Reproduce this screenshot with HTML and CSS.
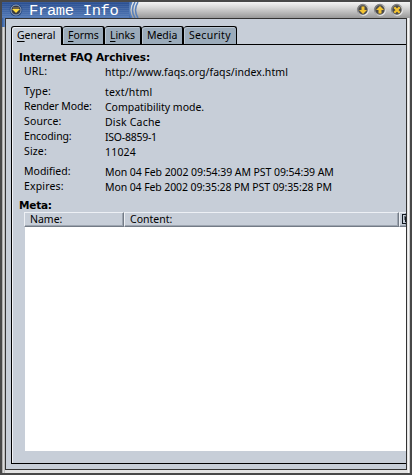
FILE: index.html
```html
<!DOCTYPE html>
<html lang="en"><head><meta charset="utf-8"><title>Frame Info</title><link rel="stylesheet" href="styles.css"></head>
<body>
<div class="window">
<header class="titlebar">
 <div class="caption">
  <svg class="orb" viewBox="0 0 14 14"><defs><linearGradient id="metal" x2="1" y2="1"><stop stop-color="#626262"/><stop offset="1" stop-color="#fff"/></linearGradient></defs><circle cx="7" cy="7" r="6.3" fill="#27487e"/><circle cx="7" cy="7" r="5" fill="#353a43" stroke="#91a5c5"/><path d="M3 6h8L7 10z" fill="#ffdc42"/><path d="M4 5h6" stroke="#a88c50"/></svg>
  <span class="title">Frame Info</span>
 </div>
 <svg class="curves" viewBox="0 0 12 16"><path d="M0 0H3Q-1 8 3 16H0z" fill="#4770b2"/><path d="M3 0Q-2 8 3 16M6 0Q1 8 6 16M9 0Q4 8 9 16" fill="none" stroke="#577fba" stroke-width="1.5"/></svg>
 <div class="buttons">
  <svg viewBox="0 0 14 14"><circle cx="7" cy="7" r="5.4" fill="#4b4b4b" stroke="url(#metal)" stroke-width="1.5"/><path d="M5.5 3.5h3V7H11L7 11 3 7h2.5z" fill="#f4c431"/></svg>
  <svg viewBox="0 0 14 14"><circle cx="7" cy="7" r="5.4" fill="#4b4b4b" stroke="url(#metal)" stroke-width="1.5"/><path d="M5.5 10.5h3V7H11L7 3 3 7h2.5z" fill="#f4c431"/></svg>
  <svg viewBox="0 0 14 14"><circle cx="7" cy="7" r="5.4" fill="#4b4b4b" stroke="url(#metal)" stroke-width="1.5"/><path d="M4.3 4.3 9.7 9.7M9.7 4.3 4.3 9.7" stroke="#f4c431" stroke-width="2.3"/></svg>
 </div>
</header>
<main class="content">
 <nav class="tabs">
  <div class="tab active t1"><span><u>G</u>eneral</span></div><div class="tab t2"><span><u>F</u>orms</span></div><div class="tab t3"><span><u>L</u>inks</span></div><div class="tab t4"><span>Med<u>i</u>a</span></div><div class="tab t5"><span>Security</span></div>
 </nav>
 <section class="panel">
  <h1>Internet FAQ Archives:</h1>
  <dl>
   <div class="row gap"><dt>URL:</dt><dd class="url">http://www.faqs.org/faqs/index.html</dd></div>
   <div class="row"><dt>Type:</dt><dd class="type">text/html</dd></div>
   <div class="row"><dt class="mode">Render Mode:</dt><dd class="compat">Compatibility mode.</dd></div>
   <div class="row"><dt>Source:</dt><dd class="cache">Disk Cache</dd></div>
   <div class="row"><dt class="enc">Encoding:</dt><dd class="iso">ISO-8859-1</dd></div>
   <div class="row size"><dt>Size:</dt><dd>11024</dd></div>
   <div class="row"><dt class="mod">Modified:</dt><dd class="date">Mon 04 Feb 2002 09:54:39 AM PST 09:54:39 AM</dd></div>
   <div class="row"><dt>Expires:</dt><dd class="date d2">Mon 04 Feb 2002 09:35:28 PM PST 09:35:28 PM</dd></div>
  </dl>
  <h2>Meta:</h2>
  <div class="tree"><div class="heads"><div class="head name">Name:</div><div class="head desc">Content:</div><div class="head pick"><svg viewBox="0 0 7 10"><path d="M.5 0v10M0 .5h7M0 9.5h7M2 3h5M2 5h5M3.5 3v5" fill="none" stroke="#101820"/></svg></div></div><div class="rows"></div></div>
 </section>
</main>
</div>
</body></html>
```
FILE: styles.css
```css
*{box-sizing:border-box}
body{margin:0;overflow:hidden;background:#484848;font:10.5px/15px "Noto Sans",sans-serif;color:#000}
.window{width:412px;height:475px;border:2px solid #484848;display:flex;flex-direction:column;background:linear-gradient(90deg,#999,#eee 2px,#888 3px,#888 404px,#ddd 405px,#fff 407px,#999)}
.titlebar{height:16px;display:flex;background:linear-gradient(#f4f4f4,#d7d7d7 35%,#999);position:relative;flex:none}
.titlebar:before{content:"";position:absolute;left:0;top:16px;width:3px;height:9px;background:linear-gradient(90deg,#315ca1,#678bc2)}
.caption{width:127px;display:flex;background:repeating-linear-gradient(#ffffff12 0 1px,#0000 1px 2px),linear-gradient(#284d8f,#537ab7)}
.orb{width:14px;height:14px;margin:1px 0 0 7px}
.title{font:15.5px/16px "Liberation Mono",monospace;color:#fff;margin-left:6px;letter-spacing:-.35px;white-space:pre;margin-top:1px;height:15px}
.curves{width:12px;height:16px}
.buttons{display:flex;gap:3px;margin-left:auto;padding:1px 6px 0 0}
.buttons svg{width:14px;height:14px}
.content{height:452px;width:402px;margin-left:3px;border:1px solid #333;background:#c7ced8;padding:7px 0 0 5px;flex:none;box-shadow:0 3px #e2e2e2}
.tabs{height:19px;display:flex;background:linear-gradient(#000,#000) 0 18px/100% 1px no-repeat}
.tab{height:18px;border:solid #000;border-width:1px 2px 0 0;border-radius:3px 3px 0 0;background:#9babba;box-shadow:inset 1px 1px #bac6d1;padding:0 0 0 5px;white-space:nowrap;line-height:16px}
.tab span{display:inline-block;letter-spacing:-.05px}
.tab.active{height:19px;border-left-width:1px;background:#c7ced8;box-shadow:inset 1px 1px #edf0f5}
u{text-decoration:underline;text-underline-offset:2px;text-decoration-thickness:1px}
.t1{width:52px}.t2{width:42px}.t3{width:37px}.t4{width:42px}.t5{width:53px;border-right-width:1px}
.t5 span{letter-spacing:.3px}
.panel{height:419px;border-left:1px solid #000;border-bottom:1px solid #000;box-shadow:inset 1px 0 #f0f2f6;padding:5px 0 0 7px}
h1,h2{font:bold 10.5px/15px "DejaVu Sans",sans-serif;margin:0;white-space:nowrap}
h1{letter-spacing:-.12px}
dl{margin:-1px 0 0 5px}
.row{display:flex;height:15px}
.gap{margin-bottom:5px}.size{margin-bottom:5px}
dt{width:81px;white-space:nowrap;letter-spacing:.15px}
dt.mode{letter-spacing:-.15px}dt.enc{letter-spacing:-.12px}dt.mod{letter-spacing:0}
dd{margin:1px 0 0;white-space:nowrap;letter-spacing:.2px}
.url{letter-spacing:.07px}.compat{letter-spacing:-.26px}.compat{letter-spacing:-.02px}.iso{letter-spacing:-.25px}.date{letter-spacing:-.07px}.d2{letter-spacing:-.1px}
h2{margin-top:4px;letter-spacing:-.2px}
.tree{margin:-1px 0 0 5px}
.heads{display:flex;height:15px}
.head{height:15px;background:#c7ced8;border:1px solid;border-color:#edf0f5 #737b86 #737b86 #edf0f5;box-shadow:inset -1px -1px #9da5b0;padding-left:5px;line-height:13px}
.name{width:100px}.desc{width:275px}.pick{flex:1;border-right:0;padding:1px 0 0 2px;overflow:hidden}
.pick svg{display:block;width:7px;height:10px}
.rows{height:224px;margin-left:1px;background:#fff}
```
